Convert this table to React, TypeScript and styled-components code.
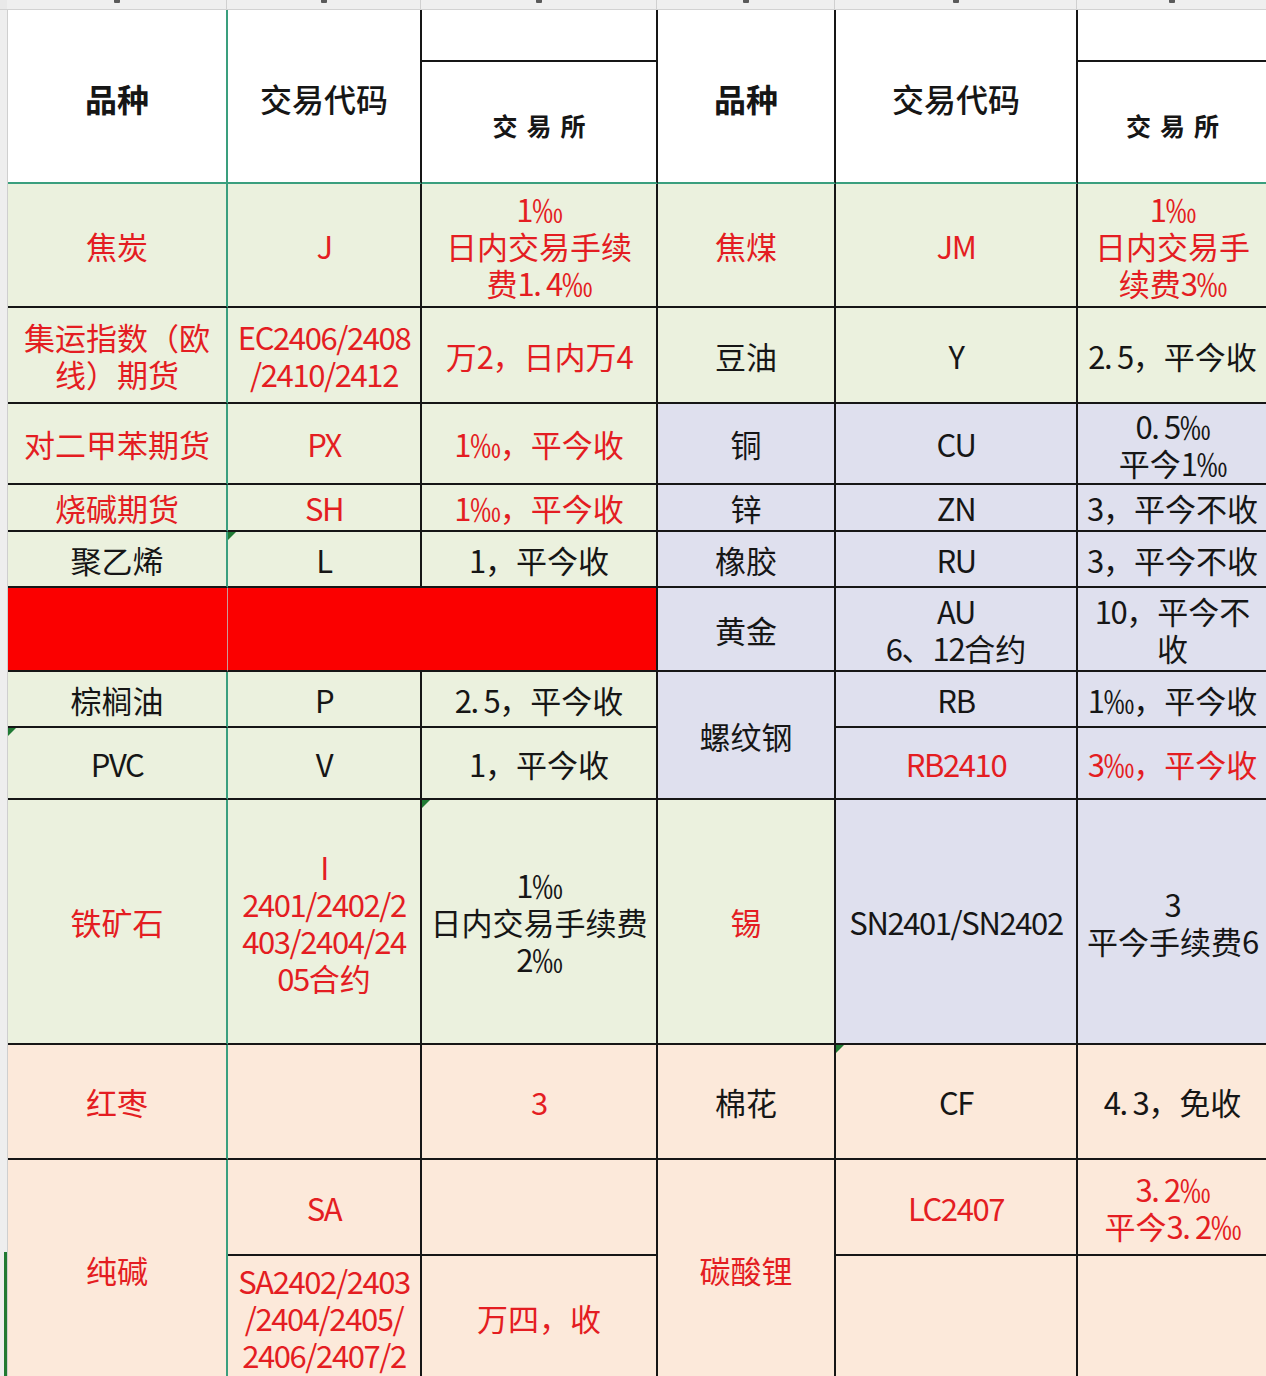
import styled, { createGlobalStyle, css } from "styled-components";

const GlobalStyle = createGlobalStyle`
  html, body {
    margin: 0;
    padding: 0;
    background: #ffffff;
    overflow: hidden;
  }
  body {
    font-family: "Noto Sans CJK SC", "Noto Sans", sans-serif;
  }
`;

const COLS = "220px 194px 236px 178px 242px 191px";
const ROWS = [52, 122, 124, 96, 81, 47, 56, 84, 56, 72, 245, 115, 96, 124];

const TEAL = "#3a9f7e";
const INK = "#161616";
const RED = "#e41d22";

type Tone = "white" | "green" | "lilac" | "peach" | "fill";

const toneBg: Record<Tone, string> = {
  white: "#ffffff",
  green: "#ebf1de",
  lilac: "#dfe0ee",
  peach: "#fce9da",
  fill: "#fb0000",
};

type CellData = {
  r: number;
  c: number;
  rs?: number;
  cs?: number;
  text?: string;
  tone: Tone;
  red?: boolean;
  flag?: boolean;
};

// body rows start at grid row 3 (rows 1-2 are the two-level header)
const cells: CellData[] = [
  // 焦炭 / 焦煤
  { r: 3, c: 1, tone: "green", red: true, text: "焦炭" },
  { r: 3, c: 2, tone: "green", red: true, text: "J" },
  { r: 3, c: 3, tone: "green", red: true, text: "1‰\n日内交易手续\n费1. 4‰" },
  { r: 3, c: 4, tone: "green", red: true, text: "焦煤" },
  { r: 3, c: 5, tone: "green", red: true, text: "JM" },
  { r: 3, c: 6, tone: "green", red: true, text: "1‰\n日内交易手\n续费3‰" },
  // 集运 / 豆油
  { r: 4, c: 1, tone: "green", red: true, text: "集运指数（欧\n线）期货" },
  { r: 4, c: 2, tone: "green", red: true, text: "EC2406/2408\n/2410/2412" },
  { r: 4, c: 3, tone: "green", red: true, text: "万2，日内万4" },
  { r: 4, c: 4, tone: "green", text: "豆油" },
  { r: 4, c: 5, tone: "green", text: "Y" },
  { r: 4, c: 6, tone: "green", text: "2. 5，平今收" },
  // 对二甲苯 / 铜
  { r: 5, c: 1, tone: "green", red: true, text: "对二甲苯期货" },
  { r: 5, c: 2, tone: "green", red: true, text: "PX" },
  { r: 5, c: 3, tone: "green", red: true, text: "1‰，平今收" },
  { r: 5, c: 4, tone: "lilac", text: "铜" },
  { r: 5, c: 5, tone: "lilac", text: "CU" },
  { r: 5, c: 6, tone: "lilac", text: "0. 5‰\n平今1‰" },
  // 烧碱 / 锌
  { r: 6, c: 1, tone: "green", red: true, text: "烧碱期货" },
  { r: 6, c: 2, tone: "green", red: true, text: "SH" },
  { r: 6, c: 3, tone: "green", red: true, text: "1‰，平今收" },
  { r: 6, c: 4, tone: "lilac", text: "锌" },
  { r: 6, c: 5, tone: "lilac", text: "ZN" },
  { r: 6, c: 6, tone: "lilac", text: "3，平今不收" },
  // 聚乙烯 / 橡胶
  { r: 7, c: 1, tone: "green", text: "聚乙烯" },
  { r: 7, c: 2, tone: "green", text: "L", flag: true },
  { r: 7, c: 3, tone: "green", text: "1，平今收" },
  { r: 7, c: 4, tone: "lilac", text: "橡胶" },
  { r: 7, c: 5, tone: "lilac", text: "RU" },
  { r: 7, c: 6, tone: "lilac", text: "3，平今不收" },
  // red band / 黄金
  { r: 8, c: 1, tone: "fill" },
  { r: 8, c: 2, cs: 2, tone: "fill" },
  { r: 8, c: 4, tone: "lilac", text: "黄金" },
  { r: 8, c: 5, tone: "lilac", text: "AU\n6、12合约" },
  { r: 8, c: 6, tone: "lilac", text: "10，平今不\n收" },
  // 棕榈油 / 螺纹钢
  { r: 9, c: 1, tone: "green", text: "棕榈油" },
  { r: 9, c: 2, tone: "green", text: "P" },
  { r: 9, c: 3, tone: "green", text: "2. 5，平今收" },
  { r: 9, c: 4, rs: 2, tone: "lilac", text: "螺纹钢" },
  { r: 9, c: 5, tone: "lilac", text: "RB" },
  { r: 9, c: 6, tone: "lilac", text: "1‰，平今收" },
  // PVC
  { r: 10, c: 1, tone: "green", text: "PVC", flag: true },
  { r: 10, c: 2, tone: "green", text: "V" },
  { r: 10, c: 3, tone: "green", text: "1，平今收" },
  { r: 10, c: 5, tone: "lilac", red: true, text: "RB2410" },
  { r: 10, c: 6, tone: "lilac", red: true, text: "3‰，平今收" },
  // 铁矿石 / 锡
  { r: 11, c: 1, tone: "green", red: true, text: "铁矿石" },
  { r: 11, c: 2, tone: "green", red: true, text: "I\n2401/2402/2\n403/2404/24\n05合约" },
  { r: 11, c: 3, tone: "green", text: "1‰\n日内交易手续费\n2‰", flag: true },
  { r: 11, c: 4, tone: "green", red: true, text: "锡" },
  { r: 11, c: 5, tone: "lilac", text: "SN2401/SN2402" },
  { r: 11, c: 6, tone: "lilac", text: "3\n平今手续费6" },
  // 红枣 / 棉花
  { r: 12, c: 1, tone: "peach", red: true, text: "红枣" },
  { r: 12, c: 2, tone: "peach" },
  { r: 12, c: 3, tone: "peach", red: true, text: "3" },
  { r: 12, c: 4, tone: "peach", text: "棉花" },
  { r: 12, c: 5, tone: "peach", text: "CF", flag: true },
  { r: 12, c: 6, tone: "peach", text: "4. 3，免收" },
  // 纯碱 / 碳酸锂
  { r: 13, c: 1, rs: 2, tone: "peach", red: true, text: "纯碱" },
  { r: 13, c: 2, tone: "peach", red: true, text: "SA" },
  { r: 13, c: 3, tone: "peach" },
  { r: 13, c: 4, rs: 2, tone: "peach", red: true, text: "碳酸锂" },
  { r: 13, c: 5, tone: "peach", red: true, text: "LC2407" },
  { r: 13, c: 6, tone: "peach", red: true, text: "3. 2‰\n平今3. 2‰" },
  { r: 14, c: 2, tone: "peach", red: true, text: "SA2402/2403\n/2404/2405/\n2406/2407/2" },
  { r: 14, c: 3, tone: "peach", red: true, text: "万四，收" },
  { r: 14, c: 5, tone: "peach" },
  { r: 14, c: 6, tone: "peach" },
];

// Latin runs get a tighter set, the sheet's font has narrow digits
const renderText = (text: string) =>
  text
    .split(/([A-Za-z0-9./‰ ]+)/)
    .filter((part) => part !== "")
    .map((part, i) =>
      /[A-Za-z0-9]/.test(part) ? <Latin key={i}>{part}</Latin> : part
    );

export default function App(): JSX.Element {
  return (
    <Page>
      <GlobalStyle />
      <ColumnBar>
        <Corner />
        {[1, 2, 3, 4, 5, 6].map((n) => (
          <ColumnHead key={n}>
            <Tick />
          </ColumnHead>
        ))}
      </ColumnBar>
      <Main>
        <Gutter>
          <Selection />
        </Gutter>
        <Sheet>
          <HeadCell $c={1} $weight={700}>品种</HeadCell>
          <HeadCell $c={2} $weight={500}>交易代码</HeadCell>
          <BlankHead $c={3} />
          <ExchangeHead $c={3}>交易所</ExchangeHead>
          <HeadCell $c={4} $weight={700}>品种</HeadCell>
          <HeadCell $c={5} $weight={500}>交易代码</HeadCell>
          <BlankHead $c={6} />
          <ExchangeHead $c={6}>交易所</ExchangeHead>

          {cells.map((cell) => (
            <Cell
              key={`${cell.r}-${cell.c}`}
              $r={cell.r}
              $c={cell.c}
              $rs={cell.rs ?? 1}
              $cs={cell.cs ?? 1}
              $tone={cell.tone}
              $red={!!cell.red}
              $flag={!!cell.flag}
            >
              {cell.text && <CellText>{renderText(cell.text)}</CellText>}
            </Cell>
          ))}
        </Sheet>
      </Main>
    </Page>
  );
}

const Page = styled.div`
  height: 100vh;
  overflow: hidden;
  display: flex;
  flex-direction: column;
  background: #ffffff;
`;

const ColumnBar = styled.div`
  height: 10px;
  flex: none;
  display: grid;
  grid-template-columns: 7px ${COLS};
  background: #efefef;
  border-bottom: 1px solid #d2d2d2;
  box-sizing: border-box;
`;

const Corner = styled.div`
  background: #e9e9e9;
`;

const ColumnHead = styled.div`
  display: flex;
  justify-content: center;
  border-right: 1px solid #d0d0d0;
`;

const Tick = styled.div`
  width: 6px;
  height: 3px;
  background: #5a5a5a;
  border-radius: 0 0 1px 1px;
`;

const Main = styled.div`
  flex: 1;
  display: flex;
  min-height: 0;
`;

const Gutter = styled.div`
  width: 7px;
  flex: none;
  display: flex;
  flex-direction: column;
  justify-content: flex-end;
  align-items: flex-end;
  background: #eeeeee;
`;

const Selection = styled.div`
  width: 3px;
  height: 124px;
  background: #217a32;
`;

const Sheet = styled.div`
  display: grid;
  grid-template-columns: ${COLS};
  grid-template-rows: ${ROWS.map((h) => `${h}px`).join(" ")};
  border-left: 1px solid #cfcfcf;
  color: ${INK};
`;

const CellBase = styled.div<{ $c: number }>`
  box-sizing: border-box;
  position: relative;
  display: flex;
  align-items: center;
  justify-content: center;
  text-align: center;
  white-space: pre-wrap;
  background: #ffffff;
  border-right: 2px solid ${(p) => (p.$c === 1 ? TEAL : INK)};
  border-bottom: 2px solid ${INK};
  overflow: hidden;
`;

const HeadCell = styled(CellBase)<{ $weight: number }>`
  grid-column: ${(p) => p.$c};
  grid-row: 1 / span 2;
  border-bottom-color: ${TEAL};
  font-size: 32px;
  font-weight: ${(p) => p.$weight};
  padding-top: 4px;
`;

const BlankHead = styled(CellBase)`
  grid-column: ${(p) => p.$c};
  grid-row: 1;
`;

const ExchangeHead = styled(CellBase)`
  grid-column: ${(p) => p.$c};
  grid-row: 2;
  border-bottom-color: ${TEAL};
  font-size: 25px;
  font-weight: 700;
  letter-spacing: 9px;
  padding-left: 9px;
  padding-top: 6px;
`;

const Cell = styled(CellBase)<{
  $r: number;
  $rs: number;
  $cs: number;
  $tone: Tone;
  $red: boolean;
  $flag: boolean;
}>`
  grid-column: ${(p) => p.$c} / span ${(p) => p.$cs};
  grid-row: ${(p) => p.$r} / span ${(p) => p.$rs};
  background: ${(p) => toneBg[p.$tone]};
  color: ${(p) => (p.$red ? RED : INK)};
  font-size: 31px;
  line-height: 37px;
  padding: 0 2px;
  ${(p) =>
    p.$tone === "fill" &&
    p.$c === 1 &&
    css`
      border-right: 1px solid #c99;
    `}
  ${(p) =>
    p.$flag &&
    css`
      &::before {
        content: "";
        position: absolute;
        top: 0;
        left: 0;
        border-top: 8px solid #1f7a34;
        border-right: 8px solid transparent;
      }
    `}
`;

const CellText = styled.div`
  white-space: pre;
`;

const Latin = styled.span`
  letter-spacing: -1.4px;
`;
